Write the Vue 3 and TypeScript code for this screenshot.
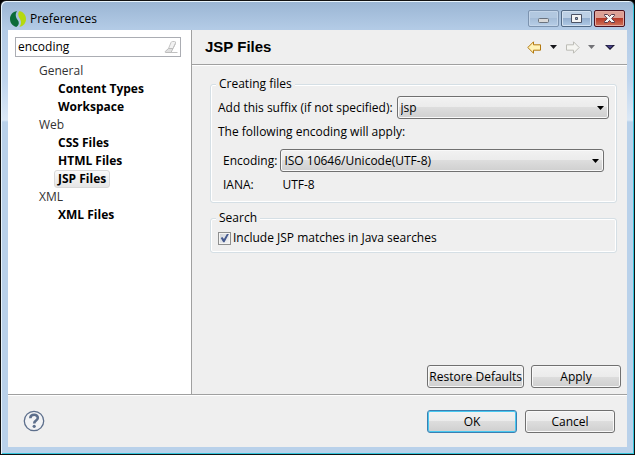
<script setup lang="ts">
import { ref } from 'vue'

interface Category {
  name: string
  pages: string[]
}

const categories: Category[] = [
  { name: 'General', pages: ['Content Types', 'Workspace'] },
  { name: 'Web', pages: ['CSS Files', 'HTML Files', 'JSP Files'] },
  { name: 'XML', pages: ['XML Files'] },
]

const filter = ref('encoding')
const selected = ref('JSP Files')
const suffix = ref('jsp')
const encoding = ref('ISO 10646/Unicode(UTF-8)')
const includeMatches = ref(true)
</script>

<template>
  <div class="window">
    <header class="titlebar">
      <svg class="app-icon" width="16" height="16" viewBox="0 0 16 16" aria-hidden="true">
        <path d="M7 0C2.500 .8 0 4 0 8c0 3.700 2.500 7 6.300 8C9.200 14 9.600 11.500 7.700 9 5.600 6.500 5 3 7 0z" fill="#0b6b38" />
        <path d="M9.500 0C13.500 1 16 4 16 8s-2.500 7-6.600 8c1.900-2.500 2.200-5.500.6-8C8.200 5.300 7.400 2.300 9.500 0z" fill="#b5d90f" />
      </svg>
      <h1 class="caption">Preferences</h1>
      <div class="controls">
        <button type="button" class="control" aria-label="Minimize">
          <svg width="13" height="13" viewBox="0 0 13 13">
            <rect x="1.500" y="6.500" width="10" height="4" rx="1" fill="#d8d8d8" stroke="#69727e" />
          </svg>
        </button>
        <button type="button" class="control active" aria-label="Maximize">
          <svg width="13" height="13" viewBox="0 0 13 13">
            <path d="M1.500 2.500h10v8h-10zM5.500 5.500v2h2v-2z" fill="#f4f4f4" stroke="#4c5365" fill-rule="evenodd" />
          </svg>
        </button>
        <button type="button" class="control close" aria-label="Close">
          <svg width="13" height="13" viewBox="0 0 13 13">
            <path d="M1.500 2.500h3l2 2 2-2h3v1L8.700 6.500l2.800 3v1h-3l-2-2-2 2h-3v-1l2.800-3-2.800-3z" fill="#f6f6f6" stroke="#573b4b" />
          </svg>
        </button>
      </div>
    </header>

    <div class="client">
      <div class="panes">
        <nav class="sidebar" aria-label="Preference pages">
          <div class="search">
            <input v-model="filter" type="text" aria-label="Filter" class="search-input" />
            <button type="button" class="clear" aria-label="Clear" @click="filter = ''">
              <svg width="14" height="13" viewBox="0 0 14 13">
                <path d="M4.500 7.500 7 1.500Q7.500.5 8.500.5h2q1.500 0 1 1.500L9 7.500z" fill="#f2f2f2" stroke="#c4c4c4" />
                <path d="M4.500 7.500H9L7 11.500H2Q.8 11.500 1.200 10.500z" fill="#e0e0e0" stroke="#bdbdbd" />
                <path d="M7 11.500h6.500M9 7.500l2.500-5" fill="none" stroke="#c0c0c0" />
              </svg>
            </button>
          </div>
          <ul class="tree">
            <li v-for="category in categories" :key="category.name">
              <span class="category">{{ category.name }}</span>
              <ul class="pages">
                <li v-for="page in category.pages" :key="page">
                  <a href="#" class="page" :class="{ current: page === selected }" @click.prevent="selected = page">{{ page }}</a>
                </li>
              </ul>
            </li>
          </ul>
        </nav>

        <main class="content">
          <div class="heading">
            <h2 class="page-title">JSP Files</h2>
            <div class="history">
              <button type="button" class="tool" aria-label="Back">
                <svg width="15" height="13" viewBox="0 0 15 13">
                  <path d="M.8 6.500 6.500.8v3h7v5.400h-7v3z" fill="#fff3b8" stroke="#b3780f" stroke-linejoin="round" />
                </svg>
              </button>
              <button type="button" class="tool" aria-label="Back history">
                <svg width="7" height="4" viewBox="0 0 7 4"><path d="M0 0h7L3.500 4z" fill="#16161a" /></svg>
              </button>
              <button type="button" class="tool" aria-label="Forward">
                <svg width="15" height="13" viewBox="0 0 15 13">
                  <path d="M14.200 6.500 8.500.8v3h-7v5.400h7v3z" fill="#f5f5f1" stroke="#bcbcb6" stroke-linejoin="round" />
                </svg>
              </button>
              <button type="button" class="tool" aria-label="Forward history">
                <svg width="7" height="4" viewBox="0 0 7 4"><path d="M0 0h7L3.500 4z" fill="#727276" /></svg>
              </button>
              <button type="button" class="tool menu" aria-label="Menu">
                <svg width="10" height="5" viewBox="0 0 10 5"><path d="M0 0h10L5 5z" fill="#17152c" /><path d="M1.500.5h6.500L5 3.500z" fill="#48408a" /></svg>
              </button>
            </div>
          </div>

          <form class="body" @submit.prevent>
            <fieldset class="group">
              <legend>Creating files</legend>
              <div class="row">
                <label for="suffix">Add this suffix (if not specified):</label>
                <span class="combo">
                  <select id="suffix" v-model="suffix"><option>jsp</option></select>
                </span>
              </div>
              <p class="note">The following encoding will apply:</p>
              <div class="encoding">
                <label for="encoding">Encoding:</label>
                <span class="combo">
                  <select id="encoding" v-model="encoding"><option>ISO 10646/Unicode(UTF-8)</option></select>
                </span>
                <span>IANA:</span>
                <span class="iana">UTF-8</span>
              </div>
            </fieldset>

            <fieldset class="group compact">
              <legend>Search</legend>
              <label class="check">
                <input v-model="includeMatches" type="checkbox" />
                <span>Include JSP matches in Java searches</span>
              </label>
            </fieldset>

            <div class="page-actions">
              <button type="button" class="push">Restore Defaults</button>
              <button type="button" class="push">Apply</button>
            </div>
          </form>
        </main>
      </div>

      <footer class="footer">
        <button type="button" class="help" aria-label="Help">
          <svg width="22" height="22" viewBox="0 0 22 22">
            <circle cx="11" cy="11" r="9.700" fill="#f2f3f5" stroke="#5d6f8c" stroke-width="1.300" />
            <path d="M7.300 8.200C7.500 3.600 15 3.800 14.800 8c-.1 2.600-3.600 2.500-3.600 5.400" fill="none" stroke="#5d6f8c" stroke-width="2.600" />
            <circle cx="11.200" cy="16.300" r="1.600" fill="#5d6f8c" />
          </svg>
        </button>
        <div class="dialog-actions">
          <button type="button" class="push default">OK</button>
          <button type="button" class="push">Cancel</button>
        </div>
      </footer>
    </div>
  </div>
</template>

<style>
body {
  margin: 0;
  background: #000;
}
</style>

<style scoped>
* {
  box-sizing: border-box;
}

.window {
  display: flex;
  flex-direction: column;
  min-height: 100vh;
  padding: 0 6px 6px;
  border: 1px solid #111;
  border-radius: 6px 6px 0 0;
  background: linear-gradient(#9ab5d3 0, #b3cbe6 28px, #c0d5ed 80px, #dbe8f6 119px, #b9d1ea 121px);
  box-shadow: inset 1px 1px #e8f4fc, inset -1px -1px #35c5dc;
  color: #000;
  font-family: "Open Sans", "Noto Sans", sans-serif;
  font-size: 12px;
  line-height: 18px;
}

button,
input,
select {
  color: inherit;
  font: inherit;
}

.titlebar {
  display: flex;
  align-items: center;
  height: 29px;
  padding: 6px 3px 0;
}

.caption {
  flex: 1;
  margin: 0 0 0 4px;
  font-size: 12px;
  font-weight: 400;
}

.controls {
  display: flex;
  gap: 2px;
}

.control {
  display: grid;
  place-items: center;
  width: 31px;
  height: 17px;
  padding: 0;
  border: 1px solid #7c93af;
  border-radius: 2px;
  background: linear-gradient(#b2c8e0 50%, #a5bdd8 50%, #b7cee7);
  box-shadow: inset 0 0 0 1px #c3d5e9;
}

.control.active {
  border-color: #526984;
  background: linear-gradient(#bdd0e5 50%, #94afcf 50%, #b0cae6);
  box-shadow: inset 0 0 0 1px #d3e1f0;
}

.control.close {
  border-color: #4c1220;
  background: linear-gradient(#dda095 45%, #b73927 50%, #d1745b);
  box-shadow: inset 0 0 0 1px #e3aaa0;
}

.client {
  display: flex;
  flex: 1;
  flex-direction: column;
  margin: 0 1px 1px;
  background: #efefef;
}

.panes {
  display: flex;
  flex: 1;
  border-bottom: 1px solid #a0a0a0;
}

.sidebar {
  flex: none;
  width: 184px;
  padding: 7px 10px 7px 7px;
  border-right: 1px solid #a0a0a0;
  background: #fff;
}

.search {
  display: flex;
  align-items: center;
  height: 20px;
  padding: 0 2px;
  border: 1px solid #abadb3;
}

.search-input {
  flex: 1;
  min-width: 0;
  height: 18px;
  padding: 0;
  border: 0;
  outline: 0;
  background: transparent;
}

.clear,
.tool,
.help {
  display: grid;
  place-items: center;
  padding: 0;
  border: 0;
  background: none;
}

.tree,
.pages {
  margin: 0;
  padding: 0;
  list-style: none;
}

.tree {
  padding: 5px 0 0 24px;
}

.category {
  display: block;
  color: #333;
}

.pages {
  padding-left: 15px;
}

.page {
  display: block;
  width: fit-content;
  height: 18px;
  padding: 0 3px;
  border: 1px solid transparent;
  border-radius: 3px;
  color: #000;
  font-weight: 700;
  line-height: 16px;
  text-decoration: none;
}

.page.current {
  border-color: #d9d9d9;
  background: linear-gradient(#fafafa, #e6e6e6);
}

.content {
  display: flex;
  flex: 1;
  flex-direction: column;
  min-width: 0;
}

.heading {
  display: flex;
  align-items: center;
  justify-content: space-between;
  height: 35px;
  padding: 0 12px 0 13px;
  border-bottom: 1px solid #a0a0a0;
  box-shadow: 0 1px #fff;
}

.page-title {
  margin: 0;
  font-family: "Liberation Sans", Arial, sans-serif;
  font-size: 15px;
  font-weight: 700;
}

.history {
  display: flex;
  align-items: center;
  gap: 8px;
}

.menu {
  margin-left: 2px;
}

.body {
  display: flex;
  flex: 1;
  flex-direction: column;
  gap: 6px;
  padding: 10px 6px 6px 18px;
}

.group {
  min-width: 0;
  margin: 0 4px 0 0;
  padding: 3px 7px 8px;
  border: 1px solid #d5dfe5;
  border-radius: 3px;
  box-shadow: inset 0 0 0 1px #fff;
}

.group.compact {
  padding: 1px 7px 4px;
}

.group legend {
  margin-left: -2px;
  padding: 0 3px;
  background: #efefef;
}

.row {
  display: flex;
  align-items: center;
  gap: 4px;
}

.row .combo {
  flex: 1;
}

.note {
  margin: 4px 0 8px;
}

.encoding {
  display: grid;
  grid-template-columns: auto 1fr;
  align-items: center;
  gap: 4px 3px;
  padding: 0 5px;
}

.iana {
  padding-left: 2px;
}

.combo {
  position: relative;
  display: block;
}

.combo select {
  display: block;
  width: 100%;
  height: 23px;
  padding: 0 20px 0 3px;
  border: 1px solid #707070;
  border-radius: 3px;
  appearance: none;
  background: linear-gradient(#f2f2f2 0, #ebebeb 50%, #dddddd 50%, #cfcfcf);
  box-shadow: inset 0 0 0 1px #f9f9f9;
}

.combo::after {
  position: absolute;
  top: 10px;
  right: 5px;
  width: 7px;
  height: 4px;
  background: #000;
  clip-path: polygon(0 0, 100% 0, 50% 100%);
  content: "";
  pointer-events: none;
}

.check {
  display: flex;
  align-items: center;
  gap: 2px;
  height: 20px;
}

.check input {
  position: relative;
  flex: none;
  width: 13px;
  height: 13px;
  margin: 0;
  border: 1px solid #8e8f8f;
  appearance: none;
  background: linear-gradient(135deg, #cfd3d9, #f6f6f6);
  box-shadow: inset 0 0 0 1px #f4f4f4;
}

.check input:checked::after {
  position: absolute;
  inset: 1px;
  background: #44598f;
  clip-path: polygon(8% 50%, 26% 40%, 44% 62%, 78% 4%, 100% 4%, 50% 96%, 36% 96%);
  content: "";
}

.page-actions {
  display: flex;
  justify-content: flex-end;
  gap: 7px;
  margin-top: auto;
}

.push {
  min-width: 90px;
  height: 23px;
  padding: 0 1px;
  border: 1px solid #707070;
  border-radius: 3px;
  background: linear-gradient(#f2f2f2 0, #ebebeb 50%, #dddddd 50%, #cfcfcf);
  box-shadow: inset 0 0 0 1px #f9f9f9;
  line-height: 20px;
  white-space: nowrap;
}

.push.default {
  border-color: #3c7fb1;
  box-shadow: inset 0 0 0 1px #48c8f0;
}

.footer {
  display: flex;
  align-items: flex-start;
  justify-content: space-between;
  height: 52px;
  padding: 14px 12px 0 15px;
  border-top: 1px solid #fff;
}

.dialog-actions {
  display: flex;
  gap: 8px;
}
</style>
